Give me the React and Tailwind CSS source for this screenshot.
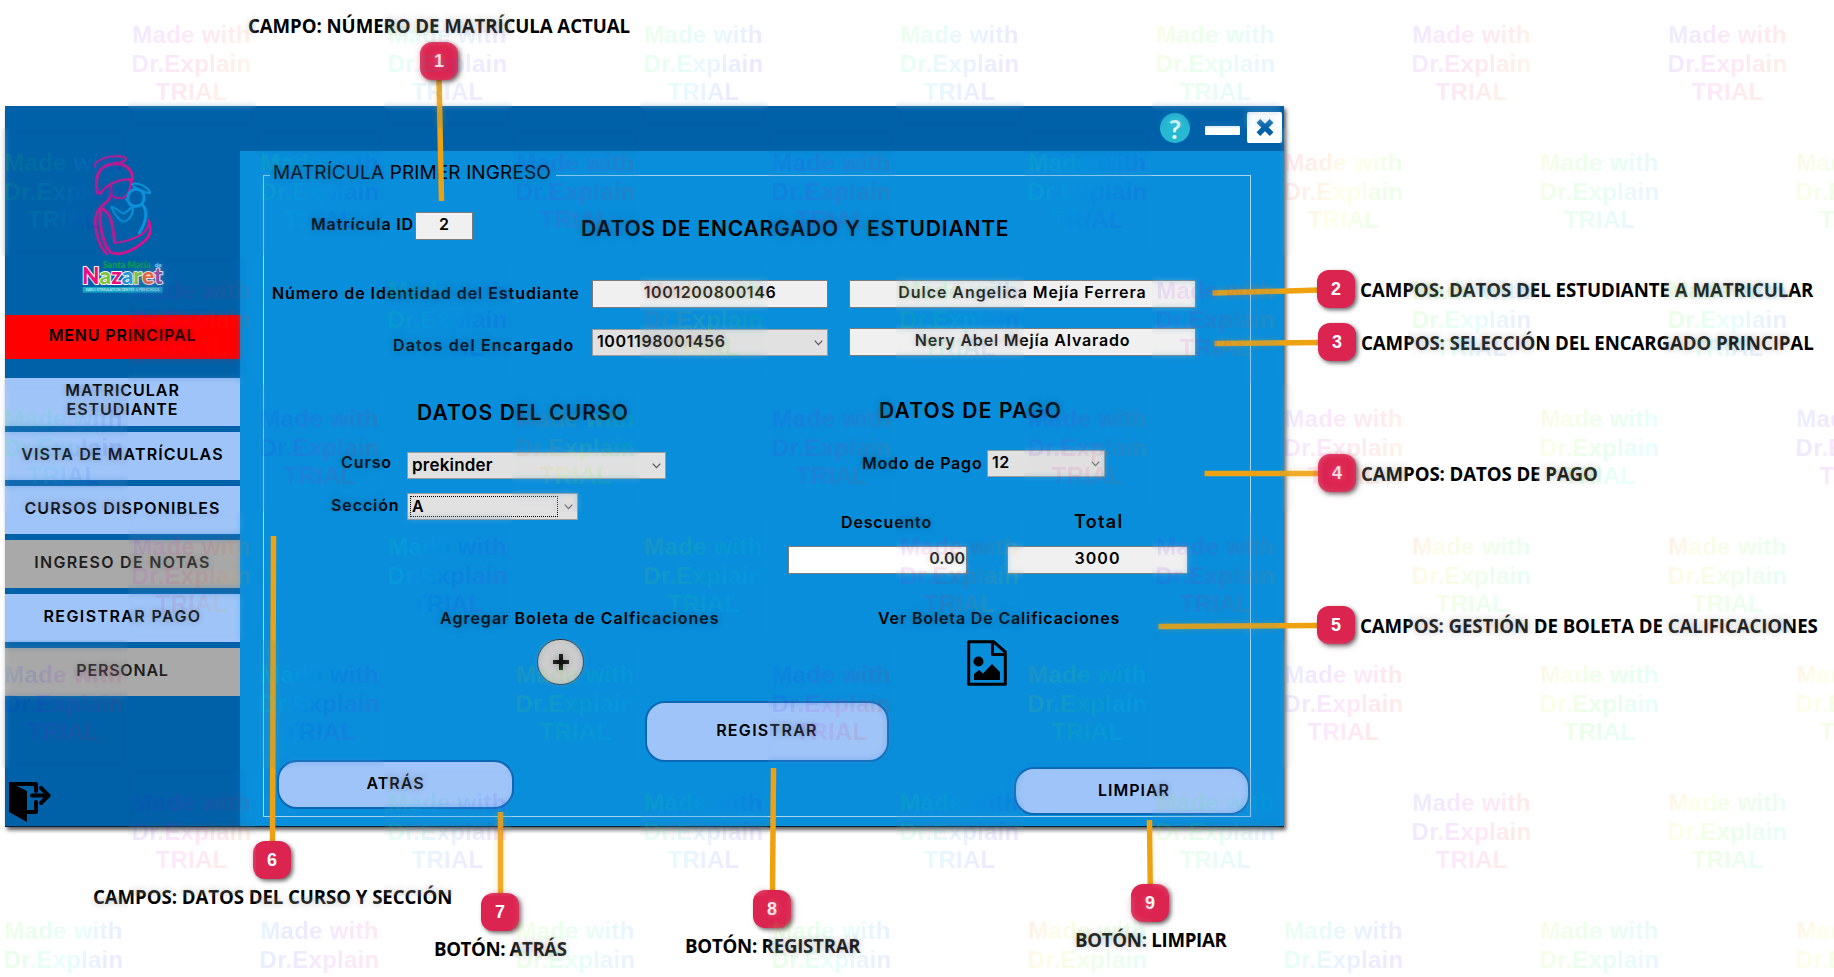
import React from "react";

const TILE_HUES = [
  [null, 235, null, 110, null, 95, null, 105, null, 50, null, 235, null, 220],
  [90, null, 100, null, 215, null, 215, null, 110, null, 320, null, 50, null, 30],
  [null, 225, null, 100, null, 330, null, 70, null, 240, null, 70, null, 70],
  [90, null, 210, null, 330, null, 225, null, 230, null, 230, null, 30, null, 210],
  [null, 250, null, 130, null, 40, null, 260, null, 235, null, 0, null, 0],
  [190, null, 130, null, 40, null, 210, null, 30, null, 210, null, 20, null, 10],
  [null, 215, null, 110, null, 105, null, 105, null, 50, null, 215, null, 10],
  [80, null, 180, null, 60, null, 70, null, 0, null, 110, null, 45, null, 10],
];

function gradient(h) {
  const stops = [0, 50, 100, 150, 200].map((d) => `hsl(${(h + d) % 360} 100% 50% / 0.09)`);
  return `linear-gradient(115deg, ${stops.join(", ")})`;
}

function Watermark() {
  return (
    <div className="pointer-events-none absolute left-0 top-0 grid w-[1920px] grid-cols-[repeat(15,128px)]">
      {TILE_HUES.map((row, r) =>
        Array.from({ length: 15 }, (_, c) => {
          const hue = row[c];
          if (hue === null || hue === undefined) return <div key={`${r}-${c}`} className="h-32" />;
          return (
            <div key={`${r}-${c}`} className="relative h-32">
              <div className="absolute inset-0 opacity-25 backdrop-blur-[3px]" />
              <div
                className="relative h-32 bg-clip-text pt-[21px] pr-px text-center font-['Liberation_Sans',sans-serif] text-[24px] leading-[28.6px] font-bold tracking-[0.25px] whitespace-nowrap text-transparent"
                style={{ backgroundImage: gradient(hue) }}
              >
                Made with
                <br />
                Dr.Explain
                <br />
                TRIAL
              </div>
            </div>
          );
        })
      )}
    </div>
  );
}

function Logo() {
  return (
    <svg viewBox="0 0 330 465" className="h-[155px] w-[110px]" fill="none" strokeLinecap="round" strokeLinejoin="round">
      <g stroke="#d9118c" strokeWidth="8">
        <path d="M76 66C66 52 104 34 142 34C176 34 178 48 140 53" strokeWidth="6" />
        <path d="M83 145C68 80 100 55 140 56C182 58 194 92 183 112" strokeWidth="9" />
        <path d="M184 104C160 100 118 110 90 146" strokeWidth="7" />
        <path d="M183 112C180 135 172 160 150 160C136 160 126 154 123 146C128 138 122 126 122 118" strokeWidth="6" />
        <path d="M123 150C118 180 76 176 76 232C76 270 92 310 110 326" />
        <path d="M96 192C126 200 128 250 134 290" strokeWidth="9" />
        <path d="M92 198C86 240 100 300 122 322C150 334 190 318 224 288C244 268 244 252 236 228" strokeWidth="9" />
        <path d="M236 226C238 262 206 284 134 294" strokeWidth="6" />
      </g>
      <g stroke="#0a93dc" strokeWidth="9">
        <path d="M186 118C206 108 240 132 240 144C224 144 206 134 190 124" strokeWidth="6" />
        <path d="M174 160C172 140 190 130 206 134C226 140 226 166 214 178C202 188 182 184 178 174L170 164" />
        <path d="M124 186C140 186 150 204 162 206C172 200 178 190 188 186C192 204 178 228 160 230C144 224 132 204 124 186Z" strokeWidth="6" />
        <path d="M218 180C236 200 226 236 208 264" />
      </g>
      <text x="98" y="368" fontSize="27" fontWeight="900" fontFamily="Lato, sans-serif" fill="#06a04c" textLength="145" lengthAdjust="spacingAndGlyphs">Santa María</text>
      <text x="254" y="366" fontSize="19" fontWeight="900" fontFamily="Lato, sans-serif" fill="#9fe0ff">de</text>
      <text x="36" y="416" fontSize="68" fontWeight="900" fontFamily="Lato, sans-serif" stroke="#fff" strokeWidth="6" paintOrder="stroke" textLength="242" lengthAdjust="spacingAndGlyphs">
        <tspan fill="#ed0f7d">N</tspan>
        <tspan fill="#7cc242">a</tspan>
        <tspan fill="#ed0f7d">z</tspan>
        <tspan fill="#1b8fdc">a</tspan>
        <tspan fill="#7cc242">r</tspan>
        <tspan fill="#f1592a">e</tspan>
        <tspan fill="#8c3f9b">t</tspan>
      </text>
      <rect x="38" y="426" width="240" height="17" fill="#17a5c4" />
      <text x="47" y="439" fontSize="12" fontWeight="700" fontFamily="Lato, sans-serif" fill="#b9e8f2" textLength="222" lengthAdjust="spacingAndGlyphs">EARLY STIMULATION CENTER &amp; PRESCHOOL</text>
    </svg>
  );
}

function ExitIcon() {
  return (
    <svg viewBox="0 0 42 41" className="h-[41px] w-[42px]" fill="none" stroke="#000" strokeWidth="4" strokeLinejoin="round">
      <path d="M1 3H27V10M27 21V31H17" strokeLinecap="round" />
      <path d="M0 1L18 10V41L0 31Z" fill="#000" stroke="none" />
      <path d="M23 14.5H39M32 7L39.5 14.5L32 22" strokeLinecap="round" />
    </svg>
  );
}

function ImageFileIcon() {
  return (
    <svg viewBox="0 0 40 46" className="h-[46px] w-10" fill="none" stroke="#000" strokeWidth="3" strokeLinejoin="round">
      <path d="M1.7 1.7H26.5L38.3 12V44.3H1.7Z" />
      <path d="M25.5 2V14.5H38" />
      <circle cx="11.5" cy="21.5" r="5" fill="#000" stroke="none" />
      <path d="M7 40V34L12 30L16 33.5L25 24L33 32V40Z" fill="#000" stroke="none" />
    </svg>
  );
}

function Chevron() {
  return (
    <svg viewBox="0 0 9 6" className="h-1.5 w-[9px] shrink-0" fill="none" stroke="#555" strokeWidth="1.2">
      <path d="M0.7 0.7L4.5 4.6L8.3 0.7" />
    </svg>
  );
}

const field = "flex shrink-0 border border-[#7a7a7a] bg-[#f0f0f0] text-[16px] leading-[22px] font-semibold";
const select = "flex shrink-0 items-center justify-between border border-[#9a9a9a] bg-[#e1e1e1] pl-1 pr-[4px] text-[16px] leading-[20px] font-semibold";

function NavButton({ children, tone }) {
  return (
    <div
      className={
        tone === "grey"
          ? "flex h-12 items-center justify-center bg-[#a9a9a9] text-center leading-[19px] text-[#1e1e1e]"
          : "flex h-12 items-center justify-center bg-[#9fc4f9] text-center leading-[19px]"
      }
    >
      <span className="-mt-1">{children}</span>
    </div>
  );
}

function Sidebar() {
  return (
    <aside className="flex h-full w-[235px] shrink-0 flex-col bg-[#0060a8] text-[16px] font-semibold">
      <div className="h-[209px] pl-[65px] pt-[39px]">
        <Logo />
      </div>
      <div className="flex h-11 items-center justify-center bg-[#ff0000]">
        <span className="-mt-1 tracking-[0.85px]">MENU PRINCIPAL</span>
      </div>
      <nav className="mt-[19px] flex flex-col gap-1.5">
        <NavButton>
          <span className="tracking-[0.95px]">MATRICULAR<br />ESTUDIANTE</span>
        </NavButton>
        <NavButton><span className="tracking-[1.1px]">VISTA DE MATRÍCULAS</span></NavButton>
        <NavButton><span className="tracking-[1.1px]">CURSOS DISPONIBLES</span></NavButton>
        <NavButton tone="grey"><span className="tracking-[1.3px]">INGRESO DE NOTAS</span></NavButton>
        <NavButton><span className="tracking-[1.4px]">REGISTRAR PAGO</span></NavButton>
        <NavButton tone="grey"><span className="tracking-[0.8px]">PERSONAL</span></NavButton>
      </nav>
      <div className="mt-auto pb-1 pl-1">
        <ExitIcon />
      </div>
    </aside>
  );
}

function TitleBar() {
  return (
    <header className="flex h-[45px] shrink-0 items-center justify-end bg-[#0060a8] pr-0.5 pb-2">
      <span className="mt-[7px] flex h-[30px] w-[30px] items-center justify-center rounded-full bg-[#27b8d2] font-['Lato',sans-serif] text-[27px] leading-none font-bold text-[#e6fbff]">?</span>
      <span className="ml-[15px] mt-[12px] h-[9px] w-[35px] rounded-[1px] bg-white" />
      <span className="ml-[7px] mt-[5px] flex h-[31px] w-[35px] items-center justify-center rounded-[2px] bg-white">
        <svg viewBox="0 0 18 18" className="h-[17px] w-[18px]" stroke="#0060a8" strokeWidth="5.5">
          <path d="M2 2L16 16M16 2L2 16" />
        </svg>
      </span>
    </header>
  );
}

function MainForm() {
  return (
    <div className="min-h-0 flex-1 bg-[#098edb] pl-[23px] pt-6">
      <div className="flex h-[642px] w-[988px] flex-col border border-[#a9d4ef]">
        <div className="-mt-[15px] ml-[6px] flex h-6 w-[286px] items-center bg-[#098edb] pl-[3px] text-[19px] font-normal whitespace-nowrap">
          <span className="tracking-[0.12px]">MATRÍCULA PRIMER INGRESO</span>
        </div>

        <div className="mt-[27px] flex h-7">
          <span className="w-[151px] pl-[47px] leading-[25px] tracking-[0.85px] whitespace-nowrap">Matrícula ID</span>
          <div className={`${field} h-7 w-[58px] justify-center`}>2</div>
          <span className="ml-[108px] text-[21px] leading-[33px] tracking-[0.8px] whitespace-nowrap">DATOS DE ENCARGADO Y ESTUDIANTE</span>
        </div>

        <div className="mt-10 flex h-7">
          <span className="w-[328px] shrink-0 pl-2 leading-[26px] tracking-[0.95px] whitespace-nowrap">Número de Identidad del Estudiante</span>
          <div className={`${field} h-7 w-[236px] justify-center tracking-[0.6px]`}>1001200800146</div>
          <div className={`${field} ml-[21px] h-7 w-[347px] justify-center tracking-[0.95px]`}>Dulce Angelica Mejía Ferrera</div>
        </div>

        <div className="mt-5 flex h-7">
          <span className="w-[328px] shrink-0 pl-[129px] pt-[4px] leading-[26px] tracking-[1.15px] whitespace-nowrap">Datos del Encargado</span>
          <div className={`${select} mt-px h-[27px] w-[236px]`}><span className="-mt-1 tracking-[0.6px]">1001198001456</span><Chevron /></div>
          <div className={`${field} ml-[21px] h-7 w-[347px] justify-center tracking-[0.8px]`}>Nery Abel Mejía Alvarado</div>
        </div>

        <div className="mt-[43px] mb-px flex h-6 text-[21px] leading-6 whitespace-nowrap">
          <span className="w-[615px] pl-[153px] pt-[2px] tracking-[1.1px]">DATOS DEL CURSO</span>
          <span className="tracking-[1.2px]">DATOS DE PAGO</span>
        </div>

        <div className="flex h-[262px]">
          <section className="w-[500px] pt-7">
            <div className="flex h-[27px]">
              <span className="w-[143px] pl-[77px] leading-5 tracking-[0.9px]">Curso</span>
              <div className={`${select} h-[27px] w-[259px]`}><span className="-mt-0.5 text-[17px] tracking-[0.2px]">prekinder</span><Chevron /></div>
            </div>
            <div className="mt-3.5 flex h-[27px]">
              <span className="w-[143px] pl-[67px] leading-6 tracking-[0.9px]">Sección</span>
              <div className={`${select} h-[27px] w-[171px] pl-[2px]`}>
                <span className="h-[21px] w-[148px] border border-dotted border-black pl-px leading-[18px]">A</span>
                <Chevron />
              </div>
            </div>
            <div className="mt-[86px] h-6 pl-[176px] leading-6 tracking-[1px] whitespace-nowrap">Agregar Boleta de Calficaciones</div>
            <div className="mt-[9px] pl-[273px]">
              <div className="flex h-[46px] w-[47px] items-center justify-center rounded-full border border-[#333] bg-[#cdcdcd]">
                <svg viewBox="0 0 16 16" className="h-4 w-4" stroke="#000" strokeWidth="4"><path d="M8 0V16M0 8H16" /></svg>
              </div>
            </div>
          </section>

          <section className="w-[486px] pt-[26px]">
            <div className="flex h-[27px]">
              <span className="w-[223px] pl-[98px] leading-[27px] tracking-[0.8px] whitespace-nowrap">Modo de Pago</span>
              <div className={`${select} h-[27px] w-[118px]`}><span className="-mt-1 tracking-[0.5px]">12</span><Chevron /></div>
            </div>
            <div className="mt-[33px] flex h-6 leading-6">
              <span className="w-[310px] pl-[77px] tracking-[0.85px]">Descuento</span>
              <span className="text-[18px] tracking-[1.3px]">Total</span>
            </div>
            <div className="mt-3 flex pl-6">
              <div className="flex h-7 w-[179px] justify-end border border-[#7a7a7a] bg-white pr-px leading-[22px]">0.00</div>
              <div className={`${field} ml-10 h-7 w-[181px] justify-center tracking-[1.1px]`}>3000</div>
            </div>
            <div className="mt-8 h-6 pl-[114px] leading-6 tracking-[0.85px] whitespace-nowrap">Ver Boleta De Calificaciones</div>
            <div className="mt-2.5 pl-[203px]"><ImageFileIcon /></div>
          </section>
        </div>

        <button className="mt-[15px] ml-[381px] h-[61px] w-[244px] shrink-0 rounded-[20px] border-2 border-[#0b66b4] bg-[#9fc4f9] pb-1 tracking-[1.3px]">REGISTRAR</button>
        <div className="-mt-0.5 flex justify-between pl-[13px]">
          <button className="h-[49px] w-[237px] rounded-[20px] border-2 border-[#0b66b4] bg-[#9fc4f9] pb-1 tracking-[1px]">ATRÁS</button>
          <button className="mt-[7px] h-12 w-[236px] rounded-[20px] border-2 border-[#0b66b4] bg-[#9fc4f9] pb-0.5 pl-1 tracking-[1px]">LIMPIAR</button>
        </div>
      </div>
    </div>
  );
}

const LINES = [
  [439, 78, 441.5, 201],
  [1212.5, 293, 1320, 290],
  [1214.5, 343.5, 1320, 342.5],
  [1204.5, 473.5, 1320, 473.5],
  [1158.5, 626.5, 1320, 625.5],
  [273.5, 536, 272.5, 843],
  [500.5, 812, 500.5, 895],
  [773.5, 768, 772.5, 892],
  [1149.5, 820, 1150.3, 886],
];

const BADGES = [
  "left-[420px] top-[42px]",
  "left-[1317px] top-[270px]",
  "left-[1318px] top-[323px]",
  "left-[1318px] top-[454px]",
  "left-[1317px] top-[606px]",
  "left-[253px] top-[841px]",
  "left-[481px] top-[893px]",
  "left-[753px] top-[890px]",
  "left-[1131px] top-[884px]",
];

const CAPTIONS = [
  ["CAMPO: NÚMERO DE MATRÍCULA ACTUAL", "left-[248px] top-[14px] tracking-[-0.08px]"],
  ["CAMPOS: DATOS DEL ESTUDIANTE A MATRICULAR", "left-[1360px] top-[278px] tracking-[-0.05px]"],
  ["CAMPOS: SELECCIÓN DEL ENCARGADO PRINCIPAL", "left-[1361px] top-[331px] tracking-[-0.1px]"],
  ["CAMPOS: DATOS DE PAGO", "left-[1361px] top-[462px] tracking-[-0.1px]"],
  ["CAMPOS: GESTIÓN DE BOLETA DE CALIFICACIONES", "left-[1360px] top-[614px] tracking-[-0.1px]"],
  ["CAMPOS: DATOS DEL CURSO Y SECCIÓN", "left-[93px] top-[885px] tracking-[-0.08px]"],
  ["BOTÓN: ATRÁS", "left-[434px] top-[937px] tracking-[-0.4px]"],
  ["BOTÓN: REGISTRAR", "left-[685px] top-[934px] tracking-[-0.25px]"],
  ["BOTÓN: LIMPIAR", "left-[1075px] top-[928px] tracking-[-0.3px]"],
];

function Callouts() {
  return (
    <>
      <svg viewBox="0 0 1834 977" className="absolute left-0 top-0 h-[977px] w-[1834px]" stroke="#eea211" strokeWidth="5.5">
        {LINES.map(([x1, y1, x2, y2], i) => (
          <line key={i} x1={x1} y1={y1} x2={x2} y2={y2} />
        ))}
      </svg>
      {BADGES.map((pos, i) => (
        <div
          key={i}
          className={`absolute flex h-[38px] w-[38px] items-center justify-center rounded-[12px] bg-[#dc2450] font-['Liberation_Sans',sans-serif] text-[18px] font-bold text-white shadow-[2px_2px_4px_rgba(0,0,0,0.6)] ${pos}`}
        >
          {i + 1}
        </div>
      ))}
      {CAPTIONS.map(([text, pos]) => (
        <div key={text} className={`absolute font-['Open_Sans',sans-serif] text-[18.67px] leading-6 font-bold whitespace-nowrap ${pos}`}>
          {text}
        </div>
      ))}
    </>
  );
}

export default function App() {
  return (
    <div className="relative h-[977px] w-[1834px] overflow-hidden bg-white pl-[5px] pt-[106px] font-['Inter',sans-serif] text-[16px] font-semibold text-black">
      <div className="flex h-[721px] w-[1279px] border-b border-[#06202f] shadow-[2px_3px_4px_rgba(0,0,0,0.65)]">
        <Sidebar />
        <main className="flex min-w-0 flex-1 flex-col">
          <TitleBar />
          <MainForm />
        </main>
      </div>
      <Callouts />
      <Watermark />
    </div>
  );
}
